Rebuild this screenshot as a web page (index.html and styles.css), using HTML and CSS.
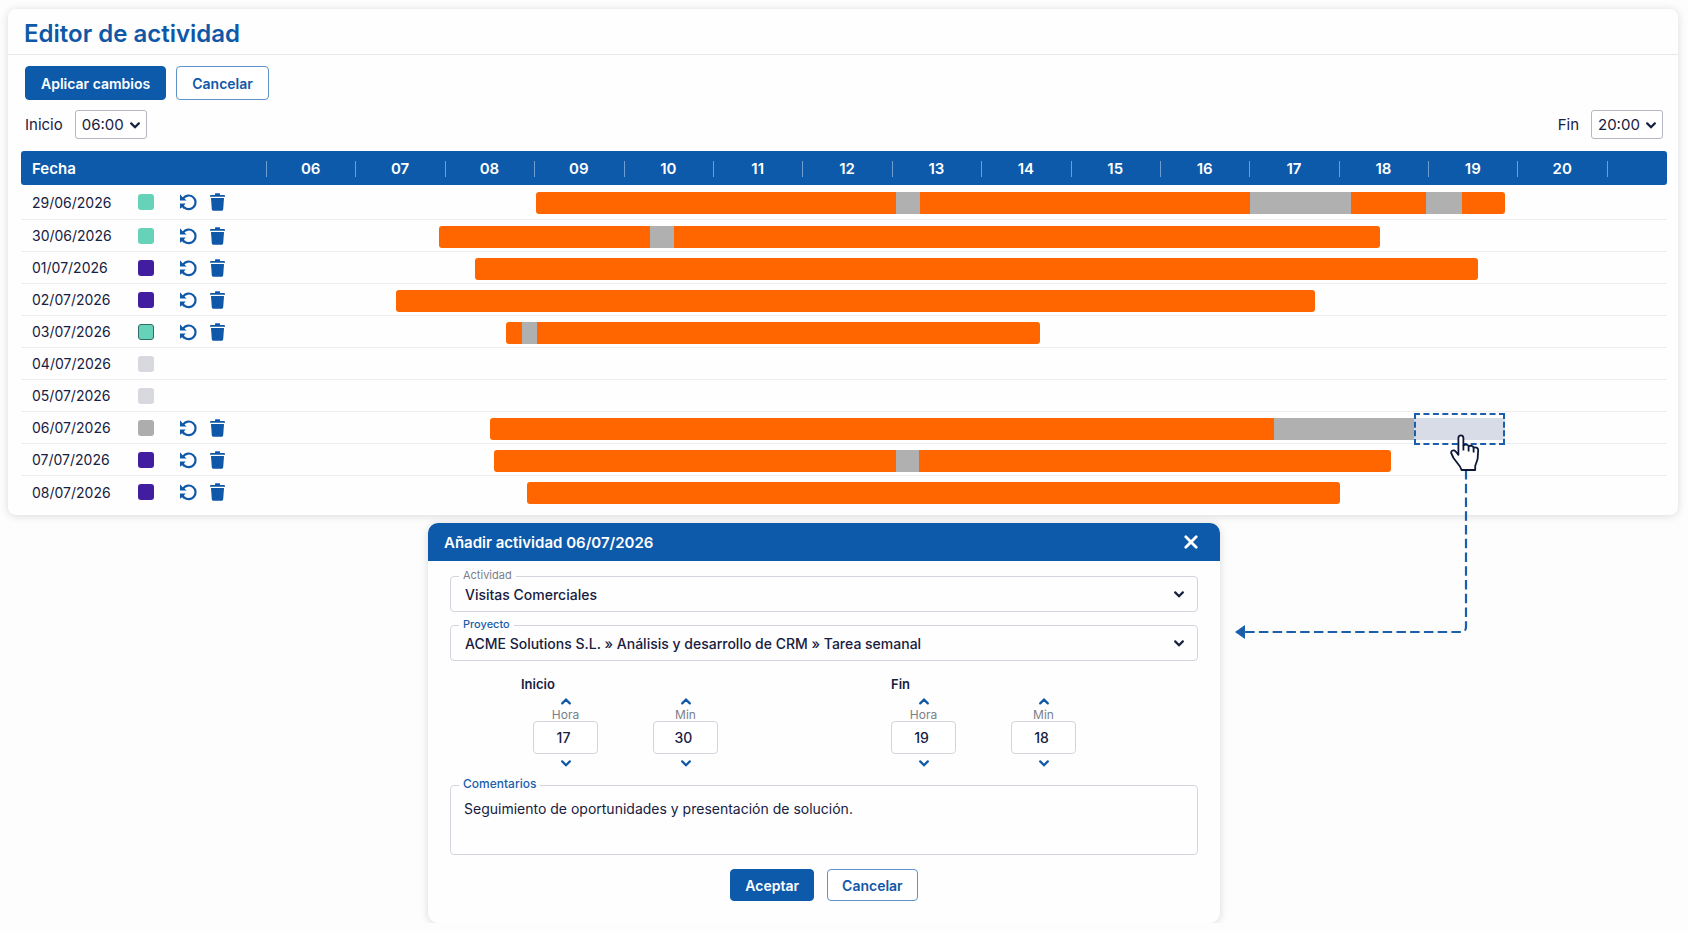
FILE: index.html
```html
<!DOCTYPE html>
<html lang="es">
<head>
    <meta charset="UTF-8">
    <meta name="viewport" content="width=device-width, initial-scale=1.0">
    <title>Editor de actividad</title>
    <link rel="stylesheet" href="styles.css">
</head>
<body>
    <!-- Iconos compartidos -->
    <svg class="sprite" aria-hidden="true">
        <symbol id="i-undo" viewBox="0 0 18 18">
            <path d="M4.2 5.4A6.8 6.8 0 1 1 5 14.2" fill="none" stroke="currentColor" stroke-width="2.2"/>
            <path d="M1 1.2v6.2h6.6L5.4 5.6 3.4 4z" fill="currentColor"/>
            <path d="M1 10.6h5.6L5 12.6l1.4 2.2-1.6 1.2-1.6-1.8L1 15.8z" fill="currentColor"/>
        </symbol>
        <symbol id="i-trash" viewBox="0 0 15 18">
            <path d="M5 1.2C5 .6 5.4.2 6 .2h3c.6 0 1 .4 1 1V2h4.2c.4 0 .8.3.8.7v1.1H0V2.7C0 2.3.4 2 .8 2H5z" fill="currentColor"/>
            <path d="M1 5h13l-.8 11.2c-.1.9-.7 1.5-1.6 1.5H3.4c-.9 0-1.5-.6-1.6-1.5z" fill="currentColor"/>
        </symbol>
        <symbol id="i-down" viewBox="0 0 10 7">
            <path d="M1.2 1.4 5 5.2 8.8 1.4" fill="none" stroke="currentColor" stroke-width="2.2" stroke-linecap="round"/>
        </symbol>
        <symbol id="i-up" viewBox="0 0 10 7">
            <path d="M1.2 5.4 5 1.6 8.8 5.4" fill="none" stroke="currentColor" stroke-width="2.2" stroke-linecap="round"/>
        </symbol>
        <symbol id="i-close" viewBox="0 0 14 14">
            <path d="M1.8 1.8 12.2 12.2M12.2 1.8 1.8 12.2" fill="none" stroke="currentColor" stroke-width="2.8" stroke-linecap="round"/>
        </symbol>
    </svg>

    <main class="page">
        <section class="editor">
            <h1 class="editor-title">Editor de actividad</h1>

            <div class="toolbar">
                <button type="button" class="btn btn-primary">Aplicar cambios</button>
                <button type="button" class="btn btn-outline">Cancelar</button>
            </div>

            <div class="range">
                <div class="range-field">
                    <label for="range-start">Inicio</label>
                    <span class="select-wrap">
                        <select id="range-start" class="range-select"><option>06:00</option></select>
                        <svg class="chevron"><use href="#i-down"/></svg>
                    </span>
                </div>
                <div class="range-field">
                    <label for="range-end">Fin</label>
                    <span class="select-wrap">
                        <select id="range-end" class="range-select"><option>20:00</option></select>
                        <svg class="chevron"><use href="#i-down"/></svg>
                    </span>
                </div>
            </div>

            <table class="schedule">
                <colgroup>
                    <col class="col-date">
                    <col span="15">
                    <col class="col-end">
                </colgroup>
                <thead>
                    <tr>
                        <th class="th-date">Fecha</th>
                        <th>06</th><th>07</th><th>08</th><th>09</th><th>10</th>
                        <th>11</th><th>12</th><th>13</th><th>14</th><th>15</th>
                        <th>16</th><th>17</th><th>18</th><th>19</th><th>20</th>
                        <th></th>
                    </tr>
                </thead>
                <tbody>
                    <tr>
                        <td><div class="day"><span class="date">29/06/2026</span><span class="swatch green"></span>
                            <button type="button" class="icon-btn" aria-label="Deshacer"><svg class="icon-undo"><use href="#i-undo"/></svg></button>
                            <button type="button" class="icon-btn" aria-label="Eliminar"><svg class="icon-trash"><use href="#i-trash"/></svg></button></div></td>
                        <td colspan="15"><div class="track" style="padding-left:20.1%">
                            <span class="work" style="flex-grow:269"></span><span class="pause" style="flex-grow:18"></span><span class="work" style="flex-grow:246"></span><span class="pause" style="flex-grow:75"></span><span class="work" style="flex-grow:56"></span><span class="pause" style="flex-grow:27"></span><span class="work" style="flex-grow:32"></span><span class="rest" style="flex-grow:76"></span></div></td>
                        <td></td>
                    </tr>
                    <tr>
                        <td><div class="day"><span class="date">30/06/2026</span><span class="swatch green"></span>
                            <button type="button" class="icon-btn" aria-label="Deshacer"><svg class="icon-undo"><use href="#i-undo"/></svg></button>
                            <button type="button" class="icon-btn" aria-label="Eliminar"><svg class="icon-trash"><use href="#i-trash"/></svg></button></div></td>
                        <td colspan="15"><div class="track" style="padding-left:12.9%">
                            <span class="work" style="flex-grow:157"></span><span class="pause" style="flex-grow:18"></span><span class="work" style="flex-grow:527"></span><span class="rest" style="flex-grow:169"></span></div></td>
                        <td></td>
                    </tr>
                    <tr>
                        <td><div class="day"><span class="date">01/07/2026</span><span class="swatch purple"></span>
                            <button type="button" class="icon-btn" aria-label="Deshacer"><svg class="icon-undo"><use href="#i-undo"/></svg></button>
                            <button type="button" class="icon-btn" aria-label="Eliminar"><svg class="icon-trash"><use href="#i-trash"/></svg></button></div></td>
                        <td colspan="15"><div class="track" style="padding-left:15.6%">
                            <span class="work" style="flex-grow:748"></span><span class="rest" style="flex-grow:96"></span></div></td>
                        <td></td>
                    </tr>
                    <tr>
                        <td><div class="day"><span class="date">02/07/2026</span><span class="swatch purple"></span>
                            <button type="button" class="icon-btn" aria-label="Deshacer"><svg class="icon-undo"><use href="#i-undo"/></svg></button>
                            <button type="button" class="icon-btn" aria-label="Eliminar"><svg class="icon-trash"><use href="#i-trash"/></svg></button></div></td>
                        <td colspan="15"><div class="track" style="padding-left:9.7%">
                            <span class="work" style="flex-grow:685"></span><span class="rest" style="flex-grow:218"></span></div></td>
                        <td></td>
                    </tr>
                    <tr>
                        <td><div class="day"><span class="date">03/07/2026</span><span class="swatch green outlined"></span>
                            <button type="button" class="icon-btn" aria-label="Deshacer"><svg class="icon-undo"><use href="#i-undo"/></svg></button>
                            <button type="button" class="icon-btn" aria-label="Eliminar"><svg class="icon-trash"><use href="#i-trash"/></svg></button></div></td>
                        <td colspan="15"><div class="track" style="padding-left:17.9%">
                            <span class="work" style="flex-grow:12"></span><span class="pause" style="flex-grow:11"></span><span class="work" style="flex-grow:375"></span><span class="rest" style="flex-grow:423"></span></div></td>
                        <td></td>
                    </tr>
                    <tr>
                        <td><div class="day"><span class="date">04/07/2026</span><span class="swatch light"></span></div></td>
                        <td colspan="15"></td>
                        <td></td>
                    </tr>
                    <tr>
                        <td><div class="day"><span class="date">05/07/2026</span><span class="swatch light"></span></div></td>
                        <td colspan="15"></td>
                        <td></td>
                    </tr>
                    <tr>
                        <td><div class="day"><span class="date">06/07/2026</span><span class="swatch gray"></span>
                            <button type="button" class="icon-btn" aria-label="Deshacer"><svg class="icon-undo"><use href="#i-undo"/></svg></button>
                            <button type="button" class="icon-btn" aria-label="Eliminar"><svg class="icon-trash"><use href="#i-trash"/></svg></button></div></td>
                        <td colspan="15"><div class="track" style="padding-left:16.7%">
                            <span class="work" style="flex-grow:585"></span><span class="pause" style="flex-grow:104"></span>
                            <span class="selection" style="flex-grow:68">
                                <!-- Flecha desde la selección hasta el diálogo -->
                                <svg class="connector" viewBox="0 0 234 170">
                                    <path d="M231 0V157Q231 162 226 162H8" fill="none" stroke="#1a5fab" stroke-width="2.2" stroke-dasharray="9.5 4.25"/>
                                    <path d="M0 162 10 155v14z" fill="#1a5fab"/>
                                </svg>
                                <svg class="hand" viewBox="0 0 30 38">
                                    <path d="M11.5 36 10 32.5 3.5 24 1.2 19C.8 17.3 2.5 15.9 4.2 16.4 6 16.9 7 19.5 8.4 20.8V4C8.4.5 13.4.5 13.4 4V11.3C15 10 18 10.5 18.6 12.2 20.5 11.3 23 11.8 23.6 13.6 25.5 12.8 28.2 13.7 28.2 16.2L27.6 25 25.2 32V36z" fill="#fff" stroke="#0d1838" stroke-width="1.8" stroke-linejoin="round"/>
                                    <path d="M13.4 11V16.5M18.6 12.5V17.5M23.6 14V18.5" fill="none" stroke="#0d1838" stroke-width="1.8"/>
                                </svg>
                            </span><span class="rest" style="flex-grow:76"></span></div></td>
                        <td></td>
                    </tr>
                    <tr>
                        <td><div class="day"><span class="date">07/07/2026</span><span class="swatch purple"></span>
                            <button type="button" class="icon-btn" aria-label="Deshacer"><svg class="icon-undo"><use href="#i-undo"/></svg></button>
                            <button type="button" class="icon-btn" aria-label="Eliminar"><svg class="icon-trash"><use href="#i-trash"/></svg></button></div></td>
                        <td colspan="15"><div class="track" style="padding-left:17%">
                            <span class="work" style="flex-grow:300"></span><span class="pause" style="flex-grow:17"></span><span class="work" style="flex-grow:352"></span><span class="rest" style="flex-grow:161"></span></div></td>
                        <td></td>
                    </tr>
                    <tr>
                        <td><div class="day"><span class="date">08/07/2026</span><span class="swatch purple"></span>
                            <button type="button" class="icon-btn" aria-label="Deshacer"><svg class="icon-undo"><use href="#i-undo"/></svg></button>
                            <button type="button" class="icon-btn" aria-label="Eliminar"><svg class="icon-trash"><use href="#i-trash"/></svg></button></div></td>
                        <td colspan="15"><div class="track" style="padding-left:19.5%">
                            <span class="work" style="flex-grow:606"></span><span class="rest" style="flex-grow:199"></span></div></td>
                        <td></td>
                    </tr>
                </tbody>
            </table>
        </section>

        <div class="dialog-row">
            <form class="dialog" role="dialog" aria-labelledby="dialog-title">
                <header class="dialog-header">
                    <h2 id="dialog-title">Añadir actividad 06/07/2026</h2>
                    <button type="button" class="close-btn" aria-label="Cerrar"><svg><use href="#i-close"/></svg></button>
                </header>

                <div class="dialog-body">
                    <div class="field">
                        <label for="activity">Actividad</label>
                        <select id="activity"><option>Visitas Comerciales</option></select>
                        <svg class="chevron"><use href="#i-down"/></svg>
                    </div>
                    <div class="field active">
                        <label for="project">Proyecto</label>
                        <select id="project"><option>ACME Solutions S.L. » Análisis y desarrollo de CRM » Tarea semanal</option></select>
                        <svg class="chevron"><use href="#i-down"/></svg>
                    </div>

                    <div class="times">
                        <div class="time-group time-start">
                            <h3>Inicio</h3>
                            <div class="spinners">
                                <div class="spinner">
                                    <button type="button" aria-label="Subir"><svg><use href="#i-up"/></svg></button>
                                    <label for="start-hour">Hora</label>
                                    <input id="start-hour" type="text" inputmode="numeric" value="17">
                                    <button type="button" aria-label="Bajar"><svg><use href="#i-down"/></svg></button>
                                </div>
                                <div class="spinner">
                                    <button type="button" aria-label="Subir"><svg><use href="#i-up"/></svg></button>
                                    <label for="start-min">Min</label>
                                    <input id="start-min" type="text" inputmode="numeric" value="30">
                                    <button type="button" aria-label="Bajar"><svg><use href="#i-down"/></svg></button>
                                </div>
                            </div>
                        </div>
                        <div class="time-group">
                            <h3>Fin</h3>
                            <div class="spinners">
                                <div class="spinner">
                                    <button type="button" aria-label="Subir"><svg><use href="#i-up"/></svg></button>
                                    <label for="end-hour">Hora</label>
                                    <input id="end-hour" type="text" inputmode="numeric" value="19">
                                    <button type="button" aria-label="Bajar"><svg><use href="#i-down"/></svg></button>
                                </div>
                                <div class="spinner">
                                    <button type="button" aria-label="Subir"><svg><use href="#i-up"/></svg></button>
                                    <label for="end-min">Min</label>
                                    <input id="end-min" type="text" inputmode="numeric" value="18">
                                    <button type="button" aria-label="Bajar"><svg><use href="#i-down"/></svg></button>
                                </div>
                            </div>
                        </div>
                    </div>

                    <div class="field active comments">
                        <label for="comments">Comentarios</label>
                        <textarea id="comments">Seguimiento de oportunidades y presentación de solución.</textarea>
                    </div>

                    <div class="dialog-actions">
                        <button type="submit" class="btn btn-primary">Aceptar</button>
                        <button type="button" class="btn btn-outline">Cancelar</button>
                    </div>
                </div>
            </form>
        </div>
    </main>
</body>
</html>
```
FILE: styles.css
```css
* {
    box-sizing: border-box;
}
body {
    margin: 0;
    background: #fdfdfd;
    color: #17203f;
    font-family: Inter, "Liberation Sans", sans-serif;
    font-size: 14px;
}
button, select, input, textarea {
    font-family: inherit;
    font-size: inherit;
    color: inherit;
    margin: 0;
}
button {
    cursor: pointer;
}
h1, h2, h3 {
    margin: 0;
    font-weight: 600;
}
.sprite {
    display: none;
}
.page {
    padding: 9px 10px 0 8px;
}

/* Tarjeta del editor */
.editor {
    background: #fefefe;
    border-radius: 8px;
    box-shadow: 0 1px 8px rgba(0, 0, 0, 0.14);
    padding-bottom: 7px;
}
.editor-title {
    padding: 10px 17px 5px 16px;
    border-bottom: 1px solid #e6e7ea;
    color: #0f58a8;
    font-size: 24px;
    line-height: 30px;
}
.toolbar {
    display: flex;
    gap: 10px;
    padding: 11px 17px 10px;
}
.btn {
    height: 34px;
    padding: 0 15px;
    border: 1px solid #0d5aab;
    border-radius: 4px;
    font-weight: 600;
}
.btn-primary {
    background: #0d5aab;
    color: #fff;
}
.btn-outline {
    background: #fff;
    border-color: #5e92cb;
    color: #0f58a8;
}
.range {
    display: flex;
    justify-content: space-between;
    padding: 0 15px 12px 17px;
}
.range-field {
    display: flex;
    align-items: center;
    gap: 12px;
    font-size: 15px;
}
.select-wrap {
    position: relative;
}
.select-wrap select, .field select {
    appearance: none;
}
.range-select {
    display: block;
    width: 72px;
    height: 29px;
    padding: 0 6px;
    border: 1px solid #b4b8c2;
    border-radius: 3px;
    background: #fff;
}
.chevron {
    position: absolute;
    right: 7px;
    top: 50%;
    width: 10px;
    height: 7px;
    margin-top: -3px;
    pointer-events: none;
}

/* Tabla de jornadas */
.schedule {
    width: calc(100% - 24px);
    margin: 0 11px 0 13px;
    border-collapse: separate;
    border-spacing: 0;
    table-layout: fixed;
}
.col-date {
    width: 245px;
}
.col-end {
    width: 60px;
}
.schedule th {
    position: relative;
    height: 34px;
    padding: 0;
    background: #0d5aab;
    color: #fff;
    font-size: 15px;
    font-weight: 600;
}
.schedule th + th::before {
    content: "";
    position: absolute;
    left: 0;
    top: 10px;
    width: 1px;
    height: 16px;
    background: #6f9fd2;
}
.schedule .th-date {
    padding-left: 11px;
    border-radius: 3px 0 0 3px;
    text-align: left;
}
.schedule th:last-child {
    border-radius: 0 3px 3px 0;
}
.schedule td {
    height: 32px;
    padding: 0;
    border-bottom: 1px solid #ededf0;
}
.schedule tbody tr:first-child td {
    height: 35px;
}
.schedule tbody tr:last-child td {
    border-bottom: none;
}
.day {
    display: flex;
    align-items: center;
    padding-left: 11px;
}
.date {
    width: 106px;
}
.swatch {
    width: 16px;
    height: 16px;
    margin-right: 25px;
    border-radius: 3px;
}
.green {
    background: #66d2b8;
}
.purple {
    background: #431da0;
}
.light {
    background: #d7d9df;
}
.gray {
    background: #adadad;
}
.outlined {
    border: 1px solid #33686c;
}
.icon-btn {
    display: flex;
    margin-right: 13px;
    padding: 0;
    border: none;
    background: none;
    color: #0f58a8;
}
.icon-undo {
    width: 18px;
    height: 18px;
}
.icon-trash {
    width: 15px;
    height: 18px;
}
.track {
    display: flex;
    height: 22px;
    margin-top: 2px;
}
.track > * {
    flex: 0 0 0;
    min-width: 0;
}
.work {
    background: #ff6600;
}
.work:first-child {
    border-radius: 3px 0 0 3px;
}
.work:nth-last-child(2) {
    border-radius: 0 3px 3px 0;
}
.work:first-child:nth-last-child(2) {
    border-radius: 3px;
}
.pause {
    background: #b0b0b0;
}
.selection {
    position: relative;
    background: #d8dce6;
}
.selection::before {
    content: "";
    position: absolute;
    inset: -5px 0;
    border: 2px dashed #1a5fab;
}
.connector {
    position: absolute;
    top: 52px;
    right: 36px;
    width: 234px;
    height: 170px;
}
.hand {
    position: absolute;
    top: 16px;
    right: 25px;
    width: 30px;
    height: 38px;
}

/* Diálogo de actividad */
.dialog-row {
    display: flex;
    justify-content: center;
    padding: 8px 38px 0 0;
}
.dialog {
    width: 792px;
    background: #fefefe;
    border-radius: 10px;
    box-shadow: 0 1px 8px rgba(0, 0, 0, 0.15);
}
.dialog-header {
    display: flex;
    justify-content: space-between;
    align-items: center;
    height: 38px;
    padding: 0 22px 0 16px;
    border-radius: 10px 10px 0 0;
    background: #0d5aab;
    color: #fff;
}
.dialog-header h2 {
    font-size: 15px;
}
.close-btn {
    display: flex;
    padding: 0;
    border: none;
    background: none;
    color: #fff;
}
.close-btn svg {
    width: 14px;
    height: 14px;
}
.dialog-body {
    padding: 15px 22px 22px;
}
.field {
    position: relative;
    margin-bottom: 13px;
}
.field label {
    position: absolute;
    top: -8px;
    left: 9px;
    padding: 0 4px;
    background: #fefefe;
    color: #7b7f89;
    font-size: 11px;
    line-height: 14px;
}
.field.active label {
    color: #1a5fab;
    font-weight: 500;
}
.field select, .field textarea {
    display: block;
    width: 100%;
    border: 1px solid #d2d5dc;
    border-radius: 4px;
    background: none;
}
.field select {
    height: 36px;
    padding: 0 14px;
    font-weight: 500;
}
.field .chevron {
    right: 14px;
}
.times {
    display: flex;
    gap: 173px;
    padding: 2px 0 15px 71px;
}
.time-start .spinners {
    padding-left: 12px;
}
.time-group h3 {
    font-size: 13px;
    line-height: 16px;
}
.spinners {
    display: flex;
    gap: 55px;
}
.spinner {
    display: flex;
    flex-direction: column;
    align-items: center;
    width: 65px;
    padding-top: 3px;
}
.spinner button {
    display: flex;
    padding: 3px;
    border: none;
    background: none;
    color: #0f58a8;
}
.spinner svg {
    width: 10px;
    height: 7px;
}
.spinner label {
    padding-top: 1px;
    color: #7b7f89;
    font-size: 12px;
    line-height: 12px;
}
.spinner input {
    width: 100%;
    height: 33px;
    margin-bottom: 3px;
    padding: 0 4px 0 0;
    border: 1px solid #d2d5dc;
    border-radius: 4px;
    background: #fff;
    font-weight: 500;
    text-align: center;
}
.field.comments {
    margin-bottom: 14px;
}
.field.comments label {
    font-size: 12px;
}
.field textarea {
    height: 70px;
    padding: 14px 13px;
    line-height: 17px;
    resize: none;
}
.dialog-actions {
    display: flex;
    justify-content: center;
    gap: 13px;
}
.dialog-actions .btn {
    height: 32px;
    padding: 0 14px;
}
```
